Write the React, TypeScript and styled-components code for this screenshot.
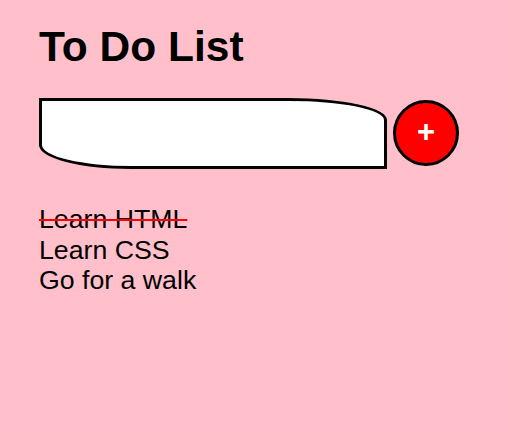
import React from "react";
import styled, { createGlobalStyle } from "styled-components";

const GlobalStyle = createGlobalStyle`
  html, body {
    margin: 0;
    padding: 0;
    background: #ffc0cb;
  }
  body {
    font-family: "Liberation Sans", Arial, sans-serif;
    color: #000;
  }
`;

const Page = styled.div`
  padding: 23px 39px;
  display: flex;
  flex-direction: column;
`;

const Title = styled.h1`
  margin: 0;
  font-size: 42.5px;
  line-height: 1.15;
  font-weight: bold;
`;

const AddRow = styled.div`
  margin-top: 26px;
  display: flex;
  align-items: center;
  gap: 6px;
`;

const TaskInput = styled.input`
  box-sizing: border-box;
  width: 348px;
  height: 71px;
  border: 3px solid #000;
  background: #fff;
  border-radius: 0 98px 0 92px / 0 22px 0 24px;
  outline: none;
  padding: 0 12px;
  font-family: "Liberation Sans", Arial, sans-serif;
  font-size: 20px;
`;

const AddButton = styled.button`
  box-sizing: border-box;
  width: 66px;
  height: 66px;
  border-radius: 50%;
  border: 3px solid #000;
  background: #ff0000;
  color: #fff;
  font-family: "Liberation Sans", Arial, sans-serif;
  font-size: 31px;
  font-weight: bold;
  line-height: 1;
  padding: 0 0 3px;
  display: flex;
  align-items: center;
  justify-content: center;
  cursor: pointer;
`;

const TaskList = styled.ul`
  margin: 35px 0 0;
  padding: 0;
  list-style: none;
`;

const TaskItem = styled.li<{ $done?: boolean }>`
  font-size: 26.7px;
  line-height: 1.15;
  text-decoration: ${(p) => (p.$done ? "line-through" : "none")};
  text-decoration-color: #ff0000;
  text-decoration-thickness: 2px;
`;

const tasks = [
  { text: "Learn HTML", done: true },
  { text: "Learn CSS", done: false },
  { text: "Go for a walk", done: false },
];

export default function App() {
  return (
    <>
      <GlobalStyle />
      <Page>
        <Title>To Do List</Title>
        <AddRow>
          <TaskInput type="text" />
          <AddButton type="button">+</AddButton>
        </AddRow>
        <TaskList>
          {tasks.map((t) => (
            <TaskItem key={t.text} $done={t.done}>
              {t.text}
            </TaskItem>
          ))}
        </TaskList>
      </Page>
    </>
  );
}
